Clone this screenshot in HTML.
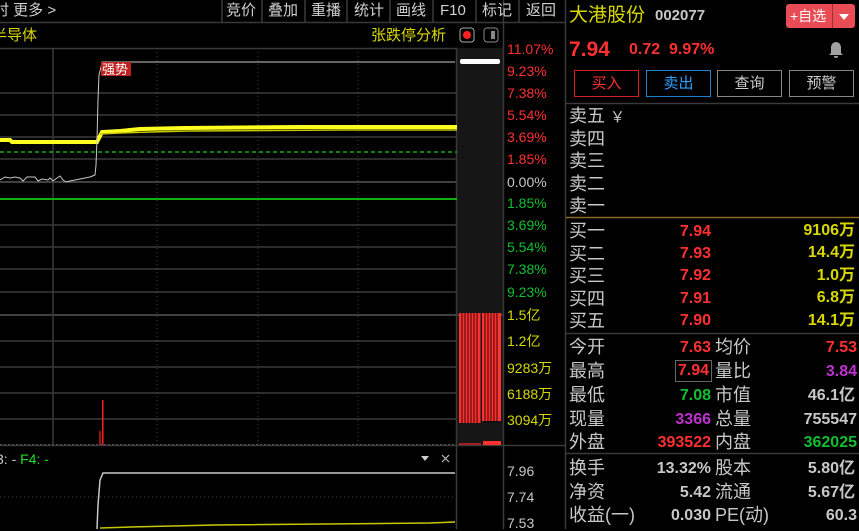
<!DOCTYPE html>
<html><head><meta charset="utf-8"><style>
*{margin:0;padding:0;box-sizing:border-box}
body{width:859px;height:529px;background:#000;overflow:hidden;position:relative;font-family:"Liberation Sans","Noto Sans CJK SC",sans-serif;color:#c8c8c8}
.a{position:absolute;white-space:nowrap;line-height:1}
.t{font-size:15px;color:#d0d0d0}
.ax{font-size:14px;left:507px}
.r{color:#ff3030}.g{color:#10c030}.y{color:#d8d800}.w{color:#c8c8c8}.p{color:#c030d0}
.lb{font-size:18px;color:#c8c8c8;left:569px}
.n{font-size:16px;font-weight:bold;text-align:right}
.btn{position:absolute;top:70px;height:27px;border:1px solid #888;font-size:15px;text-align:center;line-height:25px;width:65px}
</style></head><body>
<svg width="859" height="529" style="position:absolute;left:0;top:0">
<rect x="457" y="48" width="46" height="397" fill="#161616"/>
<g stroke="#3a3a3a" stroke-width="1.5">
<line x1="0" y1="22.5" x2="565" y2="22.5"/>
<line x1="0" y1="48.5" x2="457" y2="48.5"/>
<line x1="0" y1="93" x2="457" y2="93"/><line x1="0" y1="115" x2="457" y2="115"/>
<line x1="0" y1="137" x2="457" y2="137"/><line x1="0" y1="159" x2="457" y2="159"/>
<line x1="0" y1="182" x2="457" y2="182" stroke="#555"/>
<line x1="0" y1="225" x2="457" y2="225"/><line x1="0" y1="247" x2="457" y2="247"/>
<line x1="0" y1="269" x2="457" y2="269"/><line x1="0" y1="292" x2="457" y2="292"/>
<line x1="0" y1="315" x2="503" y2="315" stroke="#555"/><line x1="0" y1="341" x2="457" y2="341"/>
<line x1="0" y1="367" x2="457" y2="367"/><line x1="0" y1="393" x2="457" y2="393"/>
<line x1="0" y1="419" x2="457" y2="419"/>
<line x1="0" y1="445.5" x2="565" y2="445.5"/>
<line x1="53" y1="48" x2="53" y2="445"/>
<line x1="456.5" y1="48" x2="456.5" y2="529"/>
<line x1="503.5" y1="0" x2="503.5" y2="529"/>
<line x1="565.5" y1="0" x2="565.5" y2="529"/>
<line x1="222" y1="0" x2="222" y2="22"/><line x1="262" y1="0" x2="262" y2="22"/><line x1="305" y1="0" x2="305" y2="22"/><line x1="347" y1="0" x2="347" y2="22"/><line x1="390" y1="0" x2="390" y2="22"/><line x1="433" y1="0" x2="433" y2="22"/><line x1="476" y1="0" x2="476" y2="22"/><line x1="519" y1="0" x2="519" y2="22"/>
<line x1="566" y1="103.5" x2="859" y2="103.5"/><line x1="566" y1="333.5" x2="859" y2="333.5"/><line x1="566" y1="453.5" x2="859" y2="453.5"/>
</g>
<line x1="566" y1="217.5" x2="859" y2="217.5" stroke="#8a6a20" stroke-width="1.5"/>
<g stroke="#444" stroke-dasharray="1,3">
<line x1="157" y1="48" x2="157" y2="445"/><line x1="258" y1="48" x2="258" y2="445"/><line x1="358" y1="48" x2="358" y2="445"/>
<line x1="0" y1="497" x2="455" y2="497"/>
</g>
<line x1="0" y1="152" x2="457" y2="152" stroke="#10b010" stroke-width="1.5" stroke-dasharray="4,3"/>
<line x1="0" y1="199" x2="457" y2="199" stroke="#10b010" stroke-width="2"/>
<polyline fill="none" stroke="#ffff20" stroke-width="4" points="0,140 10,140 12,142 97,142 99,138 102,132 120,131 140,129 185,128 300,127 457,127"/>
<polyline fill="none" stroke="#c8c800" stroke-width="1.5" points="100,134 120,133 150,132 190,131 340,130 457,130"/>
<polyline fill="none" stroke="#c8c8c8" stroke-width="1" points="0,180 5,177 10,178 15,177 20,178 23,181 27,177 35,177 38,181 42,179 48,180 50,178 53,181 57,178 60,176 63,180 66,182 70,181 75,180 80,179 85,178 90,177 95,175 96,165 97,140 98,100 99,75 101,67 102,62 455,62"/>
<rect x="460" y="59" width="40" height="5" rx="2" fill="#fff"/>
<rect x="101" y="62" width="30" height="14" fill="#c02020"/>
<text x="102" y="74" font-size="13" fill="#fff" font-family="Liberation Sans,Noto Sans CJK SC,sans-serif">强势</text>
<g fill="#ff3030"><rect x="459" y="313" width="22" height="110"/><rect x="482" y="313" width="19" height="108"/></g>
<g stroke="#000" stroke-width="0.8"><line x1="462" y1="313" x2="462" y2="423"/><line x1="465" y1="313" x2="465" y2="423"/><line x1="468" y1="313" x2="468" y2="423"/><line x1="471" y1="313" x2="471" y2="423"/><line x1="474" y1="313" x2="474" y2="423"/><line x1="477" y1="313" x2="477" y2="423"/><line x1="481" y1="313" x2="481" y2="423"/><line x1="485" y1="313" x2="485" y2="423"/><line x1="488" y1="313" x2="488" y2="423"/><line x1="491" y1="313" x2="491" y2="423"/><line x1="494" y1="313" x2="494" y2="423"/><line x1="497" y1="313" x2="497" y2="423"/></g>
<rect x="483" y="441" width="18" height="4" fill="#ff3030"/><rect x="459" y="443" width="22" height="2" fill="#a02020"/>
<rect x="102" y="400" width="1.5" height="45" fill="#ff2020"/><rect x="99" y="431" width="2" height="14" fill="#a01010"/>
<line x1="0" y1="444.5" x2="455" y2="444.5" stroke="#555" stroke-dasharray="2,2"/>
<polyline fill="none" stroke="#c8c8c8" stroke-width="1.5" points="97,529 98,505 100,480 103,473 455,473"/>
<polyline fill="none" stroke="#c8c800" stroke-width="1.5" points="100,528 130,527 215,525 430,523 455,522"/>
<polygon points="421,456 429,456 425,461" fill="#ccc"/>
<path d="M442 455 l7 7 M449 455 l-7 7" stroke="#bbb" stroke-width="1.2"/>
<rect x="460" y="28" width="14" height="14" rx="3" fill="none" stroke="#aaa"/><circle cx="467" cy="35" r="4" fill="#ff2020"/>
<rect x="484" y="28" width="14" height="14" rx="3" fill="none" stroke="#888"/><rect x="491" y="31" width="4" height="8" fill="#888"/>
<path d="M831 53 v-6 a5 5 0 0 1 10 0 v6 l2 2 h-14 z M834 56 h4 a2 2 0 0 1 -4 0z" fill="#a0a0a0"/>
</svg>
<div class="a t" style="left:-6px;top:3px">时 更多 &gt;</div>
<div class="a t" style="left:226px;top:3px">竞价</div><div class="a t" style="left:268px;top:3px">叠加</div><div class="a t" style="left:311px;top:3px">重播</div><div class="a t" style="left:354px;top:3px">统计</div><div class="a t" style="left:396px;top:3px">画线</div><div class="a t" style="left:440px;top:3px">F10</div><div class="a t" style="left:482px;top:3px">标记</div><div class="a t" style="left:526px;top:3px">返回</div>
<div class="a y" style="left:-8px;top:28px;font-size:15px">半导体</div>
<div class="a y" style="left:371px;top:28px;font-size:15px">张跌停分析</div>
<div class="a ax r" style="top:42px">11.07%</div><div class="a ax r" style="top:64px">9.23%</div><div class="a ax r" style="top:86px">7.38%</div><div class="a ax r" style="top:108px">5.54%</div><div class="a ax r" style="top:130px">3.69%</div><div class="a ax r" style="top:152px">1.85%</div><div class="a ax w" style="top:175px">0.00%</div><div class="a ax g" style="top:196px">1.85%</div><div class="a ax g" style="top:218px">3.69%</div><div class="a ax g" style="top:240px">5.54%</div><div class="a ax g" style="top:262px">7.38%</div><div class="a ax g" style="top:285px">9.23%</div>
<div class="a ax y" style="top:308px">1.5亿</div><div class="a ax y" style="top:334px">1.2亿</div><div class="a ax y" style="top:361px">9283万</div><div class="a ax y" style="top:387px">6188万</div><div class="a ax y" style="top:413px">3094万</div>
<div class="a ax w" style="top:464px">7.96</div><div class="a ax w" style="top:490px">7.74</div><div class="a ax w" style="top:516px">7.53</div>
<div class="a" style="left:-4px;top:452px;font-size:14px"><span class="w">3: -</span> <span style="color:#20e020">F4: -</span></div>
<div class="a y" style="left:569px;top:6px;font-size:19px">大港股份</div>
<div class="a" style="left:655px;top:8px;font-size:15px;font-weight:bold;color:#c8c8c8">002077</div>
<div class="a" style="left:786px;top:4px;width:69px;height:24px;background:#e84c54;border-radius:3px;color:#fff;font-size:14px;line-height:24px;padding-left:4px">+自选<span style="position:absolute;left:46px;top:0;width:1px;height:24px;background:#a03038"></span><span style="position:absolute;left:53px;top:10px;border:5px solid transparent;border-top:6px solid #fff;border-bottom:0"></span></div>
<div class="a r" style="left:569px;top:39px;font-size:21px;font-weight:bold">7.94</div>
<div class="a r" style="left:629px;top:42px;font-size:16px;font-weight:bold">0.72&nbsp;&nbsp;9.97%</div>
<div class="btn" style="left:574px;border-color:#d02020;color:#ff3030">买入</div>
<div class="btn" style="left:646px;border-color:#2080d0;color:#30a0ff">卖出</div>
<div class="btn" style="left:717px;color:#ccc">查询</div>
<div class="btn" style="left:789px;color:#ccc">预警</div>
<div class="a lb" style="top:107px">卖五 <span style="font-size:15px">￥</span></div><div class="a lb" style="top:130px">卖四</div><div class="a lb" style="top:152px">卖三</div><div class="a lb" style="top:175px">卖二</div><div class="a lb" style="top:197px">卖一</div>
<div class="a lb" style="top:222px">买一</div><div class="a lb" style="top:245px">买二</div><div class="a lb" style="top:267px">买三</div><div class="a lb" style="top:290px">买四</div><div class="a lb" style="top:312px">买五</div>
<div class="a n r" style="right:148px;top:224px">7.94</div><div class="a n r" style="right:148px;top:246px">7.93</div><div class="a n r" style="right:148px;top:268px">7.92</div><div class="a n r" style="right:148px;top:291px">7.91</div><div class="a n r" style="right:148px;top:313px">7.90</div>
<div class="a n y" style="right:4px;top:223px">9106万</div><div class="a n y" style="right:4px;top:245px">14.4万</div><div class="a n y" style="right:4px;top:268px">1.0万</div><div class="a n y" style="right:4px;top:290px">6.8万</div><div class="a n y" style="right:4px;top:313px">14.1万</div>
<div class="a lb" style="top:338px">今开</div><div class="a lb" style="top:362px">最高</div><div class="a lb" style="top:386px">最低</div><div class="a lb" style="top:410px">现量</div><div class="a lb" style="top:433px">外盘</div>
<div class="a lb" style="left:715px;top:338px">均价</div><div class="a lb" style="left:715px;top:362px">量比</div><div class="a lb" style="left:715px;top:386px">市值</div><div class="a lb" style="left:715px;top:410px">总量</div><div class="a lb" style="left:715px;top:433px">内盘</div>
<div class="a n r" style="right:148px;top:340px">7.63</div>
<div class="a n r" style="right:147px;top:360px;border:1px solid #666;padding:2px 2px">7.94</div>
<div class="a n g" style="right:148px;top:388px">7.08</div><div class="a n p" style="right:148px;top:412px">3366</div><div class="a n r" style="right:148px;top:435px">393522</div>
<div class="a n r" style="right:2px;top:340px">7.53</div><div class="a n p" style="right:2px;top:364px">3.84</div><div class="a n w" style="right:4px;top:388px">46.1亿</div><div class="a n w" style="right:2px;top:412px">755547</div><div class="a n g" style="right:2px;top:435px">362025</div>
<div class="a lb" style="top:459px">换手</div><div class="a lb" style="top:483px">净资</div><div class="a lb" style="top:506px">收益(一)</div>
<div class="a lb" style="left:715px;top:459px">股本</div><div class="a lb" style="left:715px;top:483px">流通</div><div class="a lb" style="left:715px;top:506px">PE(动)</div>
<div class="a n w" style="right:148px;top:461px">13.32%</div><div class="a n w" style="right:148px;top:485px">5.42</div><div class="a n w" style="right:148px;top:508px">0.030</div>
<div class="a n w" style="right:4px;top:461px">5.80亿</div><div class="a n w" style="right:4px;top:485px">5.67亿</div><div class="a n w" style="right:2px;top:508px">60.3</div>
</body></html>
